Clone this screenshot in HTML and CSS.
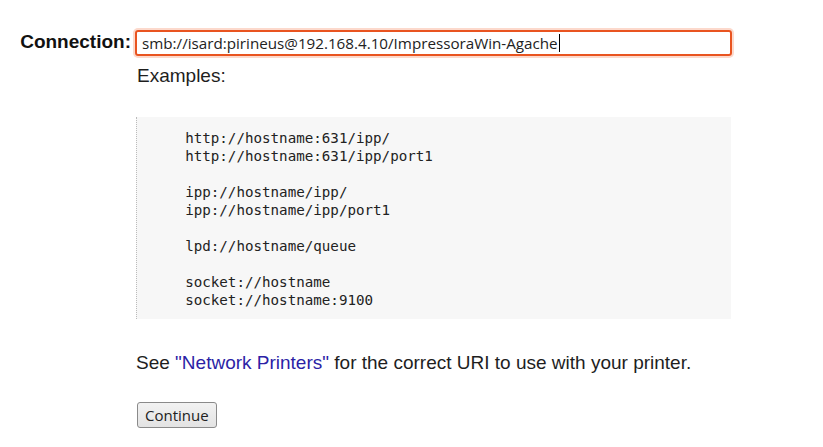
FILE: index.html
```html
<!DOCTYPE html>
<html>
<head>
<meta charset="utf-8">
<link rel="stylesheet" href="styles.css">
</head>
<body>
<div class="form">
  <div class="label">Connection:</div>
  <div class="field">
    <div class="input">smb://isard:pirineus@192.168.4.10/ImpressoraWin-Agache<span class="caret"></span></div>
    <p class="examples">Examples:</p>
<pre class="code">
    http://hostname:631/ipp/
    http://hostname:631/ipp/port1

    ipp://hostname/ipp/
    ipp://hostname/ipp/port1

    lpd://hostname/queue

    socket://hostname
    socket://hostname:9100
</pre>
    <p class="see">See <a href="#">"Network Printers"</a> for the correct URI to use with your printer.</p>
    <div class="btnrow"><span class="button">Continue</span></div>
  </div>
</div>
</body>
</html>
```

FILE: styles.css
```css
html, body { margin: 0; padding: 0; background: #fff; }
body { font-family: "Liberation Sans", Arial, sans-serif; font-size: 19px; color: #1e1e1e; }
.form {
  display: grid;
  grid-template-columns: 131px 597px;
  column-gap: 4px;
  padding-top: 30px;
}
.label {
  font-weight: bold;
  text-align: right;
  padding-top: 1px;
  color: #111;
}
.field { display: flex; flex-direction: column; align-items: flex-start; }
.input {
  width: 597px;
  height: 26px;
  box-sizing: border-box;
  border: 2px solid #e95420;
  border-radius: 3px;
  box-shadow: 0 0 0 2px #fcd9cc;
  font-family: "Open Sans", "DejaVu Sans", sans-serif;
  font-size: 15.2px;
  padding: 0 5px;
  color: #222;
  display: flex;
  align-items: center;
}
.caret { display: inline-block; width: 1px; height: 18px; background: #000; margin-left: 1px; }
.examples { margin: 9px 0 0 2px; }
.code {
  margin: 30px 0 0 1px;
  width: 595px;
  box-sizing: border-box;
  background: #f7f7f7;
  border-left: 1px dotted #bbb;
  font-family: "DejaVu Sans Mono", monospace;
  font-size: 14.2px;
  line-height: 18px;
  color: #222;
  padding: 12px 0 10px 14px;
}
.see { margin: 33px 0 0 1px; }
.see a { color: #2c1fa6; text-decoration: none; }
.btnrow { margin-top: 28px; margin-left: 2px; }
.button {
  display: inline-block;
  font-family: "Open Sans", "DejaVu Sans", sans-serif;
  font-size: 15px;
  line-height: 20px;
  padding: 2px 7px;
  border: 1px solid #8a8a8a;
  border-radius: 3px;
  background: linear-gradient(#f2f2f2, #e3e3e3);
  color: #222;
}
```
